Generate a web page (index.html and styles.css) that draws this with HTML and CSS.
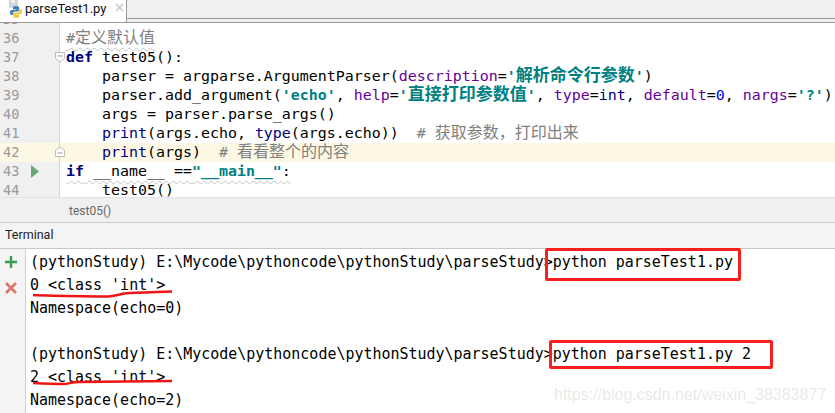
FILE: index.html
```html
<!DOCTYPE html>
<html lang="zh">
<head>
<meta charset="utf-8">
<title>parseTest1.py</title>
<link rel="stylesheet" href="styles.css">
</head>
<body>
<div class="ide">
  <div class="tabbar">
    <div class="tab">
      <svg class="pyicon" width="16" height="18" viewBox="0 0 16 18">
        <path d="M1 0h9v8H1z" fill="#d4d6da"/>
        <path d="M3 0h4v3H3z" fill="#eceef0"/>
        <path d="M8 6c-2 0-3 .6-3 2v1.500h3.200v.6H3.600C2.400 10.100 2 11 2 12.500S2.500 15 3.600 15H5v-1.800c0-1 .8-1.800 2-1.800h2.600c1 0 1.600-.7 1.600-1.600V8c0-1.300-1.300-2-3.200-2z" fill="#3f7fb5"/>
        <path d="M8 18c2 0 3.200-.6 3.200-2v-1.500H8v-.6h4.500c1.100 0 1.500-.9 1.500-2.400s-.5-2.500-1.500-2.500H11.500v1.700c0 1-.8 1.800-2 1.800H7c-1 0-1.800.7-1.800 1.600V16c0 1.300 1 2 2.800 2z" fill="#f2c73c"/>
      </svg>
      <span class="tabname">parseTest1.py</span>
      <svg class="tabclose" width="9" height="9" viewBox="0 0 9 9"><path d="M1 1l7 7M8 1L1 8" stroke="#c4c4c4" stroke-width="1.400"/></svg>
    </div>
    <div class="tabrest"></div>
  </div>

  <div class="editor">
    <div class="row clipped"><div class="gutter"><span class="num">35</span></div><div class="code"></div></div>
    <div class="row"><div class="gutter"><span class="num">36</span></div><div class="code"><span class="wavy"><span class="c">#<span class="zh">定义默认值</span></span></span></div></div>
    <div class="row"><div class="gutter"><span class="num">37</span>
      <svg class="fold" width="12" height="12" viewBox="0 0 12 12"><path d="M1.500 1.500h9v6l-4.500 3.500-4.500-3.500z" fill="#fff" stroke="#bbb"/><path d="M3.500 5h5" stroke="#999"/></svg></div>
      <div class="code"><span class="k">def</span> test05():</div></div>
    <div class="row"><div class="gutter"><span class="num">38</span></div><div class="code">    parser = argparse.ArgumentParser(<span class="p">description</span>=<span class="s">'<span class="zhb">解析命令行参数</span>'</span>)</div></div>
    <div class="row"><div class="gutter"><span class="num">39</span></div><div class="code">    parser.add_argument(<span class="s">'echo'</span>, <span class="p">help</span>=<span class="s">'<span class="zhb">直接打印参数值</span>'</span>, <span class="p">type</span>=<span class="b">int</span>, <span class="p">default</span>=<span class="n">0</span>, <span class="p">nargs</span>=<span class="s">'?'</span>)</div></div>
    <div class="row"><div class="gutter"><span class="num">40</span></div><div class="code">    args = parser.parse_args()</div></div>
    <div class="row"><div class="gutter"><span class="num">41</span></div><div class="code">    <span class="b">print</span>(args.echo, <span class="b">type</span>(args.echo))  <span class="c"># <span class="zh">获取参数，打印出来</span></span></div></div>
    <div class="row current"><div class="gutter"><span class="num">42</span>
      <svg class="fold" width="12" height="12" viewBox="0 0 12 12"><path d="M1.500 10.500h9v-6L6 1 1.500 4.500z" fill="#fff" stroke="#bbb"/><path d="M3.500 7h5" stroke="#999"/></svg></div>
      <div class="code">    <span class="b">print</span>(args)  <span class="c"># <span class="zh">看看整个的内容</span></span></div></div>
    <div class="row"><div class="gutter"><span class="num">43</span>
      <svg class="run" width="8" height="13" viewBox="0 0 8 13"><path d="M0 0l8 6.500-8 6.500z" fill="#6ba57a"/></svg></div>
      <div class="code"><span class="wavy"><span class="k">if</span> __name__ ==<span class="s">"__main__"</span>:</span></div></div>
    <div class="row"><div class="gutter"><span class="num">44</span></div><div class="code">    test05()</div></div>
  </div>

  <div class="crumb">test05()</div>
  <div class="termhead">Terminal</div>

  <div class="termbody">
    <div class="side">
      <svg width="12" height="12" viewBox="0 0 12 12"><path d="M6 0v12M0 6h12" stroke="#3a9d4f" stroke-width="2.400"/></svg>
      <svg width="12" height="12" viewBox="0 0 12 12"><path d="M1 1l10 10M11 1L1 11" stroke="#d9766a" stroke-width="2.600"/></svg>
    </div>
    <div class="term">
      <div class="tline">(pythonStudy) E:\Mycode\pythoncode\pythonStudy\parseStudy&gt;python parseTest1.py</div>
      <div class="tline">0 &lt;class 'int'&gt;</div>
      <div class="tline">Namespace(echo=0)</div>
      <div class="tline"></div>
      <div class="tline">(pythonStudy) E:\Mycode\pythoncode\pythonStudy\parseStudy&gt;python parseTest1.py 2</div>
      <div class="tline">2 &lt;class 'int'&gt;</div>
      <div class="tline">Namespace(echo=2)</div>
    </div>
  </div>

  <div class="mark box1"></div>
  <div class="mark box2"></div>
  <svg class="scribble" width="835" height="413" viewBox="0 0 835 413">
    <path d="M33 295c20 1 45 1 75 1.500 8-.5 12-3 22-3.500l42-1.500" fill="none" stroke="#f01414" stroke-width="2.500"/>
    <path d="M33 383c10 .5 22 1 30 1 6 0 8-2 16-2l93-1" fill="none" stroke="#f01414" stroke-width="2.500"/>
  </svg>
  <div class="watermark">https://blog.csdn.net/weixin_38383877</div>
</div>
</body>
</html>
```

FILE: styles.css
```css
* { box-sizing: border-box; }
html, body { margin: 0; padding: 0; }
body { background: #fff; overflow: hidden; }

.ide {
  position: relative;
  width: 835px;
  height: 413px;
  display: flex;
  flex-direction: column;
  overflow: hidden;
  font-family: "DejaVu Sans Mono", "Liberation Mono", monospace;
  color: #000;
}

/* tabs */
.tabbar { display: flex; height: 22px; background: #f0f0f0; flex: none; }
.tab {
  width: 127px;
  background: #fff;
  border-right: 1px solid #999;
  display: flex;
  align-items: flex-start;
  position: relative;
}
.pyicon { margin: 0 0 0 8px; flex: none; }
.tabname {
  font-family: Roboto, "Open Sans", sans-serif;
  font-size: 13px;
  line-height: 17px;
  margin: 0 0 0 1px;
  color: #111;
}
.tabclose { margin: 3px 0 0 9px; flex: none; }
.tabrest { flex: 1; height: 19px; border-bottom: 1px solid #999; }

/* editor */
.editor {
  height: 176px;
  flex: none;
  border-top: 1px solid #999;
  border-bottom: 1px solid #e2e2e2;
  overflow: hidden;
  background: #fff;
}
.row { display: flex; height: 19px; position: relative; }
.row.clipped { margin-top: -13px; }
.row.current { background: #fdf8e4; }
.gutter {
  width: 60px;
  flex: none;
  background: #f0f0f0;
  border-right: 1px solid #d4d4d4;
  position: relative;
}
.row.current .gutter { background: #fdf8e4; }
.num {
  display: block;
  padding-left: 3px;
  font-size: 13.500px;
  line-height: 19px;
  color: #999;
}
.fold { position: absolute; left: 54px; top: 3px; z-index: 1; }
.run { position: absolute; left: 31px; top: 3px; }
.code {
  padding-left: 6px;
  font-size: 14.95px;
  line-height: 19px;
  height: 19px;
  white-space: pre;
  overflow: visible;
}
.k { color: #000080; font-weight: bold; }
.b { color: #000080; }
.s { color: #008080; font-weight: bold; }
.p { color: #660099; }
.n { color: #0000ff; }
.c { color: #808080; }
.zh { font-family: "Noto Sans CJK SC", sans-serif; font-size: 16px; line-height: 0; }
.zhb { font-family: "Noto Sans CJK SC", sans-serif; font-size: 17px; line-height: 0; font-weight: bold; }
.wavy {
  text-decoration: underline wavy #c4c4c4 1px;
  text-decoration-skip-ink: none;
  text-underline-offset: 4px;
}

/* breadcrumb + terminal header */
.crumb {
  height: 25px;
  flex: none;
  background: #f0f0f0;
  border-bottom: 1px solid #c8c8c8;
  padding: 5px 0 0 69px;
  font-family: Roboto, "Open Sans", sans-serif;
  font-size: 12px;
  line-height: 16px;
  color: #666;
}
.termhead {
  height: 26px;
  flex: none;
  background: #f4f4f4;
  border-bottom: 1px solid #c8c8c8;
  padding: 4px 0 0 5px;
  font-family: Roboto, "Open Sans", sans-serif;
  font-size: 12.500px;
  line-height: 16px;
  color: #222;
}

/* terminal */
.termbody { flex: 1; display: flex; background: #fff; min-height: 0; }
.side {
  width: 26px;
  flex: none;
  background: #f4f4f4;
  border-right: 1px solid #d0d0d0;
  display: flex;
  flex-direction: column;
  gap: 14px;
  padding: 7px 0 0 5px;
}
.term { padding: 2px 0 0 4px; font-size: 14.97px; }
.tline { height: 23px; line-height: 23px; white-space: pre; }

/* annotations over the screenshot */
.mark {
  position: absolute;
  border: 3px solid #fa1e1e;
  border-radius: 2px;
}
.box1 { left: 545px; top: 248px; width: 196px; height: 33px; }
.box2 { left: 549px; top: 340px; width: 224px; height: 29px; }
.scribble { position: absolute; left: 0; top: 0; pointer-events: none; }
.watermark {
  position: absolute;
  left: 554px;
  top: 386px;
  font-family: "Liberation Sans", Arial, sans-serif;
  font-size: 16px;
  line-height: 18px;
  color: rgba(170, 170, 170, 0.27);
  white-space: nowrap;
}
```
